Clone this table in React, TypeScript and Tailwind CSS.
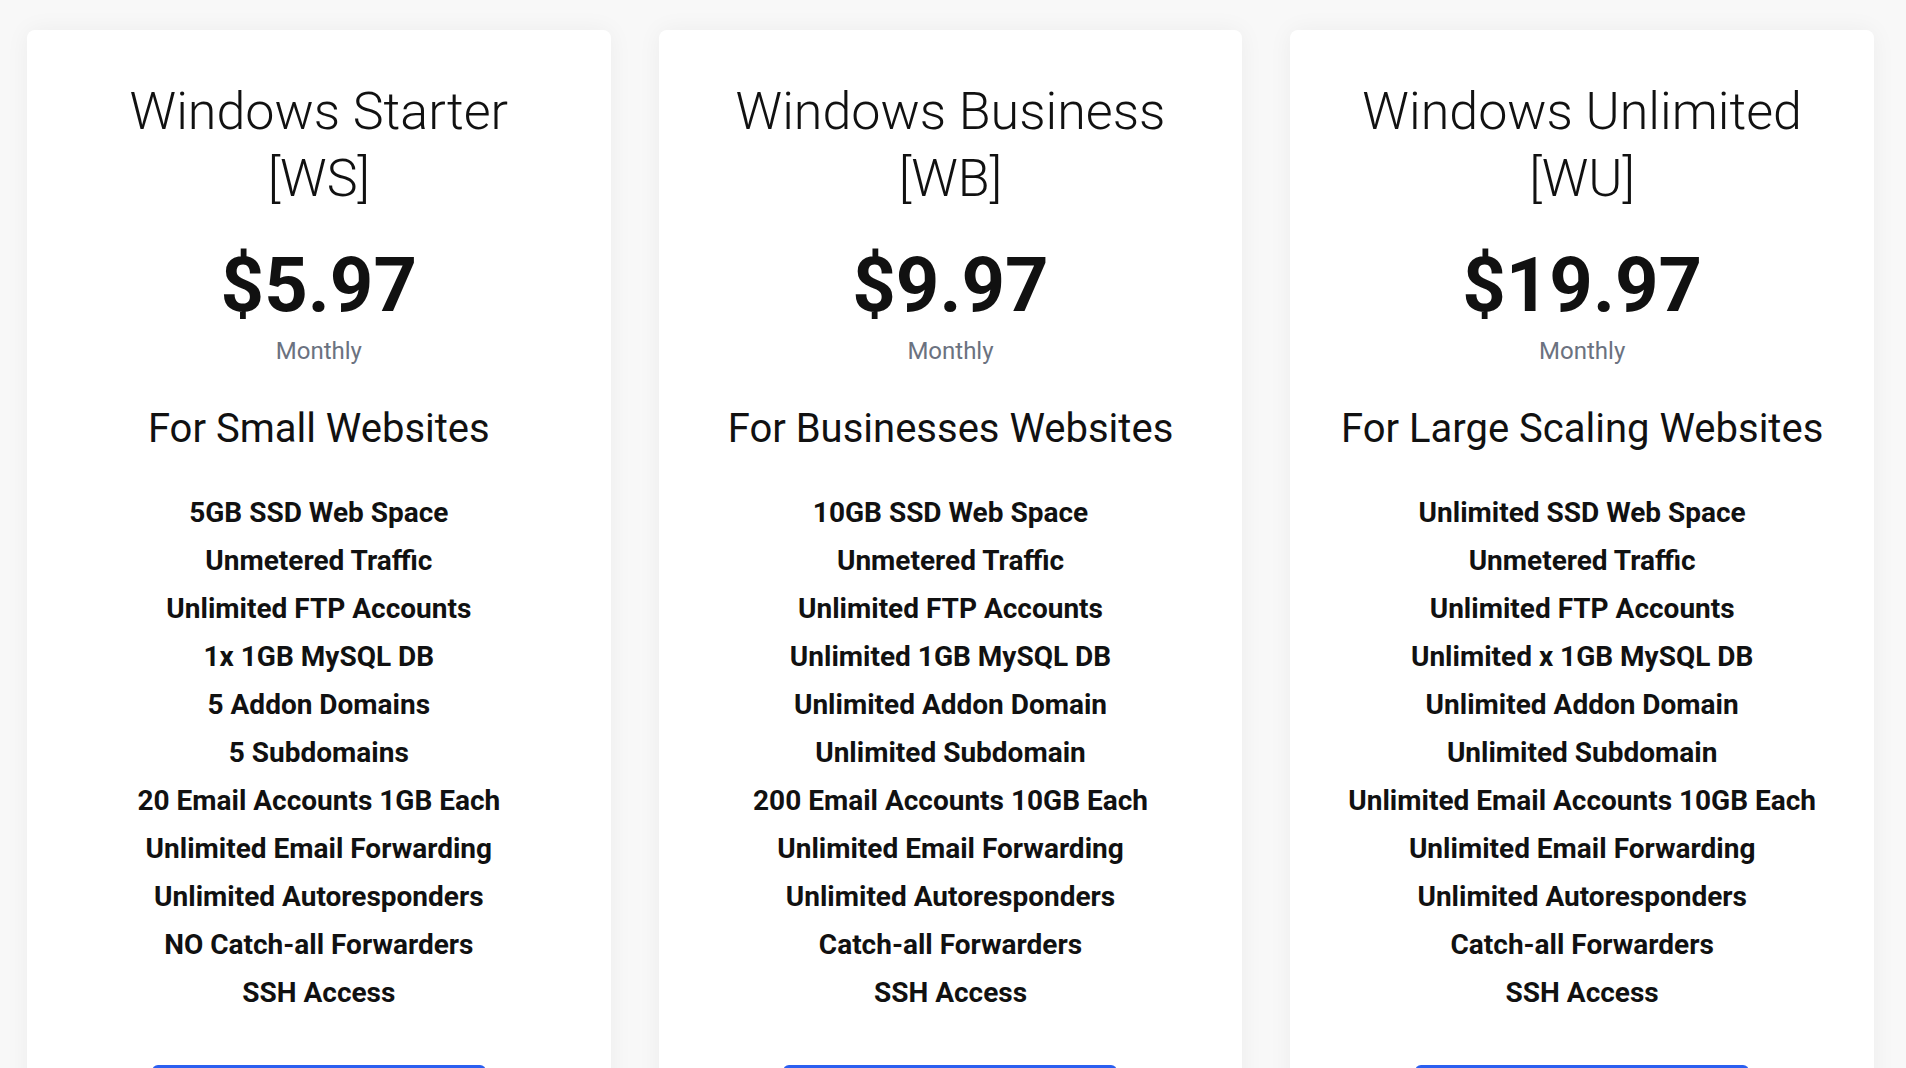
const plans = [
  {
    name: 'Windows Starter',
    code: '[WS]',
    price: '$5.97',
    tagline: 'For Small Websites',
    features: [
      '5GB SSD Web Space',
      'Unmetered Traffic',
      'Unlimited FTP Accounts',
      '1x 1GB MySQL DB',
      '5 Addon Domains',
      '5 Subdomains',
      '20 Email Accounts 1GB Each',
      'Unlimited Email Forwarding',
      'Unlimited Autoresponders',
      'NO Catch-all Forwarders',
      'SSH Access',
    ],
  },
  {
    name: 'Windows Business',
    code: '[WB]',
    price: '$9.97',
    tagline: 'For Businesses Websites',
    features: [
      '10GB SSD Web Space',
      'Unmetered Traffic',
      'Unlimited FTP Accounts',
      'Unlimited 1GB MySQL DB',
      'Unlimited Addon Domain',
      'Unlimited Subdomain',
      '200 Email Accounts 10GB Each',
      'Unlimited Email Forwarding',
      'Unlimited Autoresponders',
      'Catch-all Forwarders',
      'SSH Access',
    ],
  },
  {
    name: 'Windows Unlimited',
    code: '[WU]',
    price: '$19.97',
    tagline: 'For Large Scaling Websites',
    features: [
      'Unlimited SSD Web Space',
      'Unmetered Traffic',
      'Unlimited FTP Accounts',
      'Unlimited x 1GB MySQL DB',
      'Unlimited Addon Domain',
      'Unlimited Subdomain',
      'Unlimited Email Accounts 10GB Each',
      'Unlimited Email Forwarding',
      'Unlimited Autoresponders',
      'Catch-all Forwarders',
      'SSH Access',
    ],
  },
]

const PlanCard = ({ plan }: { plan: (typeof plans)[number] }) => {
  return (
    <div className="flex flex-col items-center rounded-lg bg-white pt-[48px] pb-10 shadow-[0_0_24px_rgba(0,0,0,0.05)] text-[#111]">
      <h2 className="text-[52px] font-light leading-[67px] text-center">
        {plan.name}
        <br />
        {plan.code}
      </h2>

      <div className="mt-[28px] text-[76px] font-bold leading-[90px]">
        {plan.price}
      </div>
      <div className="mt-[5px] text-[24px] leading-[32px] text-[#6b7280]">
        Monthly
      </div>

      <h3 className="mt-[36px] text-[40px] leading-[52px]">{plan.tagline}</h3>

      <ul className="mt-[34px] flex flex-col items-center">
        {plan.features.map((f) => (
          <li key={f} className="text-[28px] font-bold leading-[48px]">
            {f}
          </li>
        ))}
      </ul>

      <button className="mt-[48px] h-[56px] w-[334px] rounded-md bg-[#2b5ff0] text-white text-[22px] font-medium">
        Order Now
      </button>
    </div>
  )
}

const App = () => {
  return (
    <div
      className="min-h-screen bg-[#f8f8f8] pl-[27px] pr-[32px] pt-[30px]"
      style={{ fontFamily: 'Roboto, "Noto Sans", sans-serif' }}
    >
      <div className="grid grid-cols-3 gap-12">
        {plans.map((p) => (
          <PlanCard key={p.code} plan={p} />
        ))}
      </div>
    </div>
  )
}

export default App
